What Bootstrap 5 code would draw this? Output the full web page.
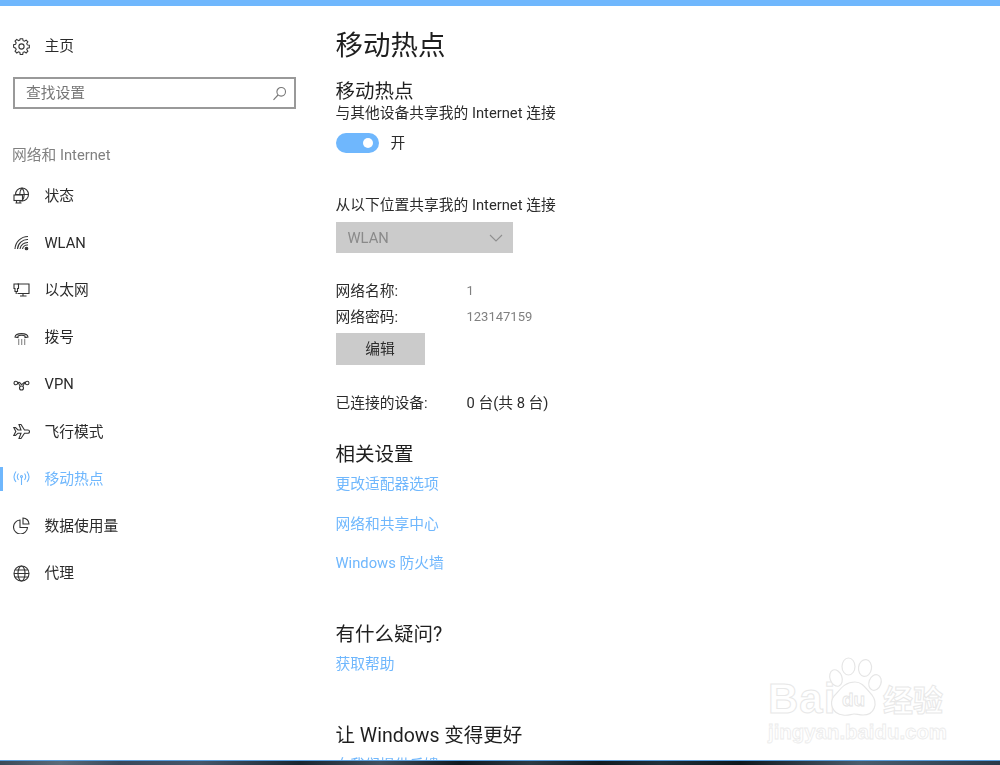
<!DOCTYPE html>
<html lang="zh-CN">
<head>
<meta charset="utf-8">
<title>移动热点</title>
<link href="https://cdn.jsdelivr.net/npm/bootstrap@5.3.0/dist/css/bootstrap.min.css" rel="stylesheet">
<style>
html,body{height:765px;overflow:hidden;background:#fff}
body{font-family:Roboto,"Noto Sans CJK SC",sans-serif;font-size:14.75px;color:#2b2b2b;line-height:20px;position:relative}
.topstrip{height:6px;background:#6fb7fd;flex:none}
.shell{height:754px;overflow:hidden;filter:blur(.35px)}
.bottomstrip{height:5px;flex:none;background:linear-gradient(90deg,#3b4a58 0,#5a6a78 6%,#39485a 12%,#46566a 20%,#1a2630 30%,#40505f 38%,#10181f 46%,#2c3a44 53%,#121a20 60%,#20303a 66%,#0f171c 74%,#4a5c6c 86%,#2a3a4a 100%);border-top:1px solid #5a9fe0}
.sidepane{width:310px;flex:none;padding:30px 0 0 0}
.mainpane{padding:21px 0 0 25.5px;min-width:0}
.sideitem{height:47.2px;padding-left:13px;gap:14.5px;position:relative;color:#2b2b2b;white-space:nowrap}
.sideitem svg{width:17px;height:17px;flex:none;stroke:#333;fill:none;stroke-width:1.1}
.sideitem.homeitem{height:20px;margin-bottom:21px}
.sideitem.activeitem{color:#6fb7fd}
.sideitem.activeitem svg{stroke:#6fb7fd}
.sideitem.activeitem::before{content:"";position:absolute;left:0;top:12px;width:3px;height:24px;background:#6fb7fd}
.searchbox{margin:0 14px 0 13px;height:32px;border:2px solid #999;padding:0 7px 0 11px;color:#767676}
.searchbox svg{width:15px;height:15px;stroke:#777;fill:none;stroke-width:1.1}
.grouplabel{color:#808080;margin:36px 0 7px 12px;height:20px;line-height:20px}
.pagetitle{font-size:27.5px;line-height:38px;font-weight:400;color:#1f1f1f;margin:0 0 15px 0}
.subhead{font-size:19.5px;line-height:24px;font-weight:400;color:#1f1f1f;margin:0 0 -1px 0}
.switchline{gap:12px;margin-top:9px;height:22px}
.toggletrack{width:43px;height:20px;border-radius:10px;background:#6fb7fd;padding-right:6px}
.toggleknob{width:10px;height:10px;border-radius:50%;background:#fff}
.fromlabel{margin-top:41px}
.fakeselect{width:177px;height:31px;background:#cbcbcb;color:#8a8a8a;padding:0 10px 0 12px;margin-top:7px}
.fakeselect svg{width:14px;height:8px;stroke:#8f8f8f;fill:none;stroke-width:1.1}
.inforow{height:26px}
.infokey{width:131px;flex:none}
.infoval{color:#808080}
.digitrun{font-size:13px}
.netblock{margin-top:25px}
.editbtn{width:89px;height:32px;background:#cbcbcb;color:#2b2b2b;border:0;border-radius:0;padding:0;font-size:14.75px;margin-top:3px;display:block}
.devrow{margin-top:25px;height:26px}
.devrow .infoval{color:#2b2b2b}
.sectionhead{font-size:19.5px;line-height:26px;font-weight:400;color:#1f1f1f;margin:0 0 6px 0}
.rel1{margin-top:26px}
.linkrow{display:block;color:#6fb7fd;text-decoration:none;height:20px;margin-bottom:19.5px}
.help1,.better1{margin-top:49px}
.markwrap{position:absolute;left:768px;top:657px;width:180px;height:90px;pointer-events:none}
.markbai{position:absolute;left:0;top:22px;font-family:"Liberation Sans",sans-serif;font-size:42px;line-height:40px;font-weight:700;letter-spacing:1px;-webkit-text-stroke:1px #e8e8e8;color:#fff}
.markdu{position:absolute;left:74px;top:33px;font-family:"Liberation Sans",sans-serif;font-size:19px;line-height:20px;font-weight:700;color:#fff;-webkit-text-stroke:.8px #e4e4e4}
.markcn{position:absolute;left:115px;top:23px;font-family:"Noto Sans CJK SC",sans-serif;font-size:30px;line-height:36px;font-weight:700;white-space:nowrap;-webkit-text-stroke:1px #e8e8e8;color:#fff}
.markurl{position:absolute;left:0;top:64px;font-family:"Liberation Sans",sans-serif;font-size:20.4px;line-height:22px;font-weight:700;white-space:nowrap;-webkit-text-stroke:.8px #ebebeb;color:#fff}
.markpaw{position:absolute;left:60px;top:0;width:60px;height:60px;fill:#fff;stroke:#e6e6e6;stroke-width:1.2}
</style>
</head>
<body class="d-flex flex-column">
<div class="topstrip"></div>
<div class="shell d-flex flex-grow-1">
  <nav class="sidepane">
    <div class="sideitem homeitem d-flex align-items-center">
      <svg viewBox="0 0 17 17"><circle cx="8.500" cy="8.500" r="2.600"/><path d="M7.200 1h2.600l.4 2.100 1.400.6 1.800-1.200 1.800 1.800-1.200 1.800.6 1.400 2.100.4v2.600l-2.100.4-.6 1.400 1.200 1.800-1.800 1.800-1.800-1.200-1.400.6-.4 2.100H7.200l-.4-2.100-1.400-.6-1.800 1.200-1.800-1.800 1.200-1.800-.6-1.400L.3 9.800V7.200l2.100-.4.6-1.400-1.200-1.800 1.800-1.800 1.800 1.200 1.400-.6z" transform="translate(.3 -.3) scale(.96)"/></svg>
      <span>主页</span>
    </div>
    <div class="searchbox d-flex align-items-center justify-content-between">
      <span>查找设置</span>
      <svg viewBox="0 0 15 15"><circle cx="9.200" cy="5.800" r="4.300"/><path d="M6 9 1.500 13.800"/></svg>
    </div>
    <div class="grouplabel">网络和 Internet</div>
    <div class="sideitem d-flex align-items-center">
      <svg viewBox="0 0 17 17"><circle cx="9" cy="7.500" r="6.500"/><path d="M2.500 7.500h13M9 1c-3 3-3 9 0 13M9 1c3 3 3 9 0 13"/><rect x="1" y="8" width="8.500" height="5.500" fill="#fff"/><path d="M3.500 13.500v2M7 13.500v2M2.500 16h6"/></svg>
      <span>状态</span>
    </div>
    <div class="sideitem d-flex align-items-center">
      <svg viewBox="0 0 17 17"><path d="M2 15A13 13 0 0 1 15 2.500M4.500 15A10 10 0 0 1 15 5.500M7 15A7.500 7.500 0 0 1 15 8.500M9.500 15A5 5 0 0 1 15 11"/><circle cx="13.500" cy="14.500" r="1.300" fill="#333"/></svg>
      <span>WLAN</span>
    </div>
    <div class="sideitem d-flex align-items-center">
      <svg viewBox="0 0 17 17"><path d="M4.500 3H16v9.500H4.500M10 12.500V15M7 15h6.500"/><path d="M1 3h4.500v4.500h-1v3H2v-3H1zM3.200 10.500V13"/></svg>
      <span>以太网</span>
    </div>
    <div class="sideitem d-flex align-items-center">
      <svg viewBox="0 0 17 17"><path d="M2 8C2.500 3.500 14.500 3.500 15 8L12 8.500V7C10.500 6 6.500 6 5 7V8.500z"/><path stroke-dasharray="1.300 1.700" d="M5 11H12.500M5 13H12.500M5 15H12.500"/></svg>
      <span>拨号</span>
    </div>
    <div class="sideitem d-flex align-items-center">
      <svg viewBox="0 0 17 17"><circle cx="2.800" cy="7" r="1.800"/><circle cx="14.200" cy="7" r="1.800"/><circle cx="8.500" cy="12" r="2"/><path d="M4.600 7C7 5 7.500 8 8.500 8.500S11 5 12.400 7M4.600 7C6 7 6.500 9 7.200 10.500M12.400 7C11 7 10.500 9 9.800 10.500"/></svg>
      <span>VPN</span>
    </div>
    <div class="sideitem d-flex align-items-center">
      <svg viewBox="0 0 17 17"><path d="M.8 4.500 2.800 8.500.8 12.500H2.500L5 10.200H8L6 15.500H8L11.500 10.200H15C17 10.200 17 7 15 7H11.500L8 1.500H6L8 7H5L2.500 4.500z"/></svg>
      <span>飞行模式</span>
    </div>
    <div class="sideitem activeitem d-flex align-items-center">
      <svg viewBox="0 0 17 17"><circle cx="8.500" cy="6.500" r="1"/><path d="M8.500 7.500V15M5.500 3.500c-1.500 2-1.500 4.500 0 6.500M11.500 3.500c1.500 2 1.500 4.500 0 6.500M3 1.500c-2.500 3.500-2.500 7.500 0 10.500M14 1.500c2.500 3.500 2.500 7.500 0 10.500"/></svg>
      <span>移动热点</span>
    </div>
    <div class="sideitem d-flex align-items-center">
      <svg viewBox="0 0 17 17"><path d="M7 3a7 7 0 1 0 7.500 7.500H7z"/><path d="M10 1a6 6 0 0 1 6 6h-6z"/></svg>
      <span>数据使用量</span>
    </div>
    <div class="sideitem d-flex align-items-center">
      <svg viewBox="0 0 17 17"><circle cx="8.500" cy="8.500" r="7.500"/><ellipse cx="8.500" cy="8.500" rx="3.500" ry="7.500"/><path d="M1 8.500h15M2.200 5h12.600M2.200 12h12.600"/></svg>
      <span>代理</span>
    </div>
  </nav>
  <main class="mainpane flex-grow-1">
    <h1 class="pagetitle">移动热点</h1>
    <h2 class="subhead">移动热点</h2>
    <div>与其他设备共享我的 Internet 连接</div>
    <div class="switchline d-flex align-items-center">
      <div class="toggletrack d-flex align-items-center justify-content-end"><div class="toggleknob"></div></div>
      <span>开</span>
    </div>
    <div class="fromlabel">从以下位置共享我的 Internet 连接</div>
    <div class="fakeselect d-flex align-items-center justify-content-between">
      <span>WLAN</span>
      <svg viewBox="0 0 14 8"><path d="M1 1l6 6 6-6"/></svg>
    </div>
    <div class="netblock">
      <div class="inforow d-flex align-items-center"><span class="infokey">网络名称:</span><span class="infoval digitrun">1</span></div>
      <div class="inforow d-flex align-items-center"><span class="infokey">网络密码:</span><span class="infoval digitrun">123147159</span></div>
      <button class="btn editbtn" type="button">编辑</button>
    </div>
    <div class="devrow d-flex align-items-center"><span class="infokey">已连接的设备:</span><span class="infoval">0 台(共 8 台)</span></div>
    <h2 class="sectionhead rel1">相关设置</h2>
    <a class="linkrow" href="#">更改适配器选项</a>
    <a class="linkrow" href="#">网络和共享中心</a>
    <a class="linkrow" href="#">Windows 防火墙</a>
    <h2 class="sectionhead help1">有什么疑问?</h2>
    <a class="linkrow" href="#">获取帮助</a>
    <h2 class="sectionhead better1">让 Windows 变得更好</h2>
    <a class="linkrow" href="#">向我们提供反馈</a>
  </main>
</div>
<div class="bottomstrip"></div>
<div class="markwrap">
  <span class="markbai">Bai</span>
  <svg class="markpaw" viewBox="0 0 60 60"><ellipse cx="8" cy="21" rx="6" ry="8.500" transform="rotate(-20 8 21)"/><ellipse cx="20.500" cy="9.500" rx="6.500" ry="8.500"/><ellipse cx="37" cy="11" rx="6.500" ry="8.500" transform="rotate(8 37 11)"/><ellipse cx="47" cy="25.500" rx="6" ry="8" transform="rotate(20 47 25.500)"/><path d="M27 25c8 0 11 7 17 13 6 8 3 20-9 20-4 0-6-1-9-1s-6 2-11 1c-11-1-14-12-9-19 6-6 10-14 21-14z"/></svg>
  <span class="markdu">du</span>
  <span class="markcn">经验</span>
  <span class="markurl">jingyan.baidu.com</span>
</div>
<script src="https://cdn.jsdelivr.net/npm/bootstrap@5.3.0/dist/js/bootstrap.bundle.min.js"></script>
</body>
</html>
